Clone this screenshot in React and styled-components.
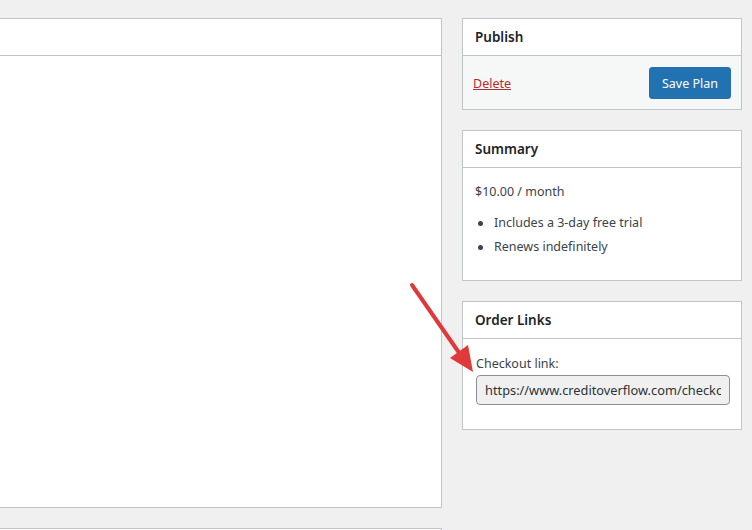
import React from "react";
import styled, { createGlobalStyle } from "styled-components";

const GlobalStyle = createGlobalStyle`
  html, body {
    margin: 0;
    padding: 0;
    background: #f0f0f1;
    font-family: "Noto Sans", "Open Sans", sans-serif;
    font-size: 12.5px;
    color: #3c434a;
    overflow: hidden;
  }
`;

const Page = styled.div`
  position: relative;
  width: 752px;
  height: 530px;
  overflow: hidden;
  display: flex;
  gap: 20px;
  padding-top: 18px;
  box-sizing: border-box;
`;

const MainColumn = styled.div`
  margin-left: -20px;
  width: 462px;
  display: flex;
  flex-direction: column;
  gap: 20px;
  flex-shrink: 0;
`;

const Side = styled.div`
  width: 280px;
  display: flex;
  flex-direction: column;
  gap: 20px;
  flex-shrink: 0;
`;

const Box = styled.div`
  background: #fff;
  border: 1px solid #c3c4c7;
  box-sizing: border-box;
  height: ${(p) => p.$h || "auto"};
  flex-shrink: 0;
`;

const BoxHeader = styled.div`
  height: 36px;
  border-bottom: 1px solid #c3c4c7;
  display: flex;
  align-items: center;
  padding: 0 12px;
  font-size: 13.5px;
  font-weight: 600;
  color: #1d2327;
`;

const Footer = styled.div`
  background: #f6f7f7;
  display: flex;
  align-items: center;
  justify-content: space-between;
  padding: 11px 10px 10px 10px;
`;

const DeleteLink = styled.a`
  color: #b32d2e;
  text-decoration: underline;
  font-size: 12.5px;
  cursor: pointer;
`;

const PrimaryButton = styled.button`
  height: 32px;
  padding: 0 12px;
  background: #2271b1;
  border: 1px solid #2271b1;
  border-radius: 3px;
  color: #fff;
  font-family: inherit;
  font-size: 12.5px;
`;

const Inside = styled.div`
  padding: ${(p) => p.$pad || "15px 12px 12px"};
`;

const Price = styled.p`
  margin: 0 0 13px;
  line-height: 18px;
`;

const List = styled.ul`
  margin: 0;
  padding: 0;
  list-style: none;
  display: flex;
  flex-direction: column;
  gap: 6px;
`;

const Item = styled.li`
  display: flex;
  align-items: center;
  line-height: 18px;
  &::before {
    content: "";
    width: 5px;
    height: 5px;
    border-radius: 50%;
    background: #3c434a;
    margin: 0 11px 0 3px;
  }
`;

const Label = styled.label`
  display: block;
  line-height: 18px;
  margin-bottom: 2px;
`;

const LinkInput = styled.input`
  width: 254px;
  box-sizing: border-box;
  height: 30px;
  padding: 0 8px;
  background: #f0f0f1;
  border: 1px solid #8c8f94;
  border-radius: 4px;
  font-family: inherit;
  font-size: 12.8px;
  color: #2c3338;
  outline: none;
`;

const Arrow = styled.svg`
  position: absolute;
  left: 400px;
  top: 275px;
  pointer-events: none;
`;

export default function App() {
  return (
    <>
      <GlobalStyle />
      <Page>
        <MainColumn>
          <Box $h="490px">
            <BoxHeader />
          </Box>
          <Box $h="60px" />
        </MainColumn>
        <Side>
          <Box>
            <BoxHeader>Publish</BoxHeader>
            <Footer>
              <DeleteLink>Delete</DeleteLink>
              <PrimaryButton>Save Plan</PrimaryButton>
            </Footer>
          </Box>
          <Box $h="151px">
            <BoxHeader>Summary</BoxHeader>
            <Inside>
              <Price>$10.00 / month</Price>
              <List>
                <Item>Includes a 3-day free trial</Item>
                <Item>Renews indefinitely</Item>
              </List>
            </Inside>
          </Box>
          <Box $h="129px">
            <BoxHeader>Order Links</BoxHeader>
            <Inside $pad="16px 10px 12px 13px">
              <Label>Checkout link:</Label>
              <LinkInput readOnly value="https://www.creditoverflow.com/checkout/?plan=1" />
            </Inside>
          </Box>
        </Side>
        <Arrow width="90" height="110" viewBox="0 0 90 110">
          <line x1="12" y1="10" x2="62" y2="82" stroke="#e0393a" strokeWidth="4" strokeLinecap="round" />
          <polygon points="73,97 50,83 68,70" fill="#e0393a" />
        </Arrow>
      </Page>
    </>
  );
}
